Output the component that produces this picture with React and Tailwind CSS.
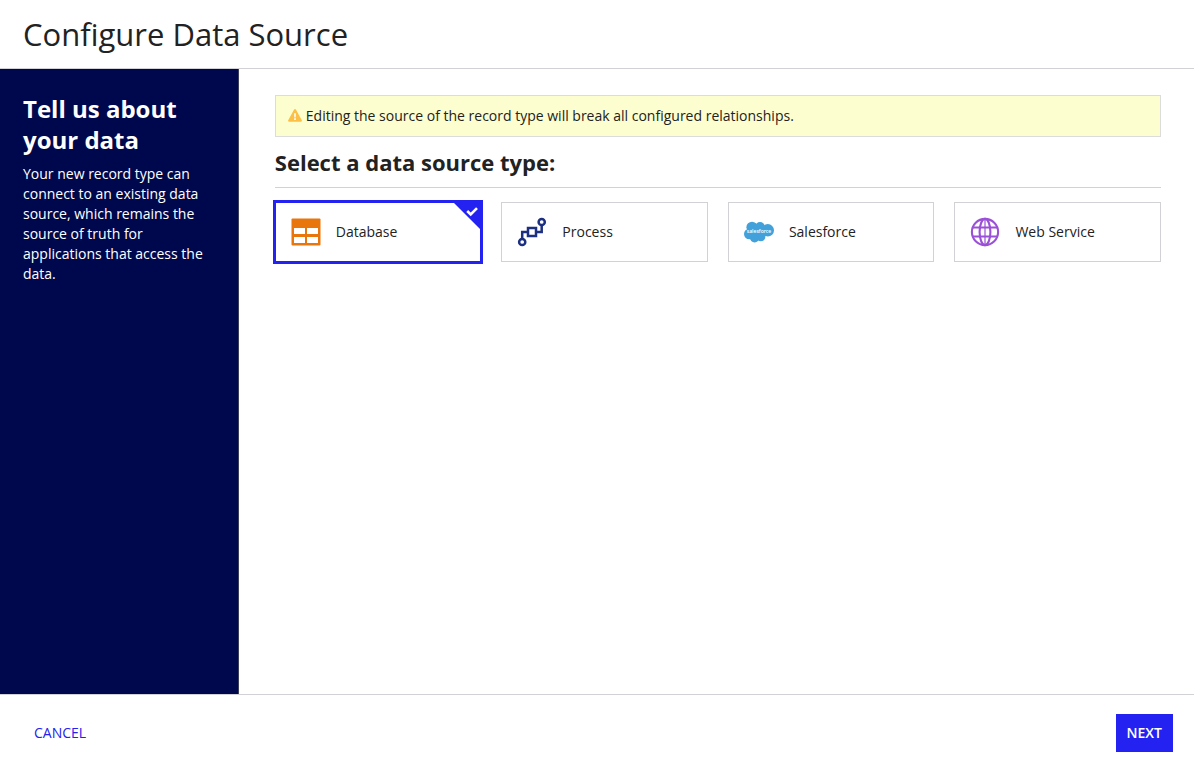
import { useState } from 'react';

function DatabaseIcon() {
  return (
    <svg viewBox="0 0 30 28" className="h-7 w-[30px]" aria-hidden="true">
      <rect x="0.5" y="0.5" width="29" height="27" rx="1" fill="#e8760c" />
      <path d="M3 10h11v6H3zM16 10h11v6H16zM3 19h11v6H3zM16 19h11v6H16z" fill="#fff" />
    </svg>
  );
}

function ProcessIcon() {
  return (
    <svg viewBox="0 0 30 30" className="h-[30px] w-[30px]" fill="none" stroke="#1c2f80" strokeWidth="2.5" aria-hidden="true">
      <circle cx="5.2" cy="25" r="3.1" />
      <circle cx="24.7" cy="5" r="3.1" />
      <rect x="11" y="11" width="8" height="8" />
      <path d="M5.2 21.7V15H11M19 15h5.7V8.3" />
    </svg>
  );
}

function SalesforceIcon() {
  return (
    <svg viewBox="0 0 30 22" className="h-[22px] w-[30px]" aria-hidden="true">
      <g fill="#42a1da">
        <circle cx="8" cy="6.3" r="5.6" />
        <circle cx="16" cy="6" r="4.9" />
        <circle cx="23.8" cy="9.3" r="6.2" />
        <circle cx="5.2" cy="13" r="5.2" />
        <circle cx="10.6" cy="16.6" r="4.8" />
        <circle cx="16.8" cy="15.7" r="4.6" />
        <path d="M5 7h20v8H5z" />
      </g>
      <text x="15" y="12" fill="#fff" fontSize="5" fontWeight="600" textAnchor="middle">
        salesforce
      </text>
    </svg>
  );
}

function GlobeIcon() {
  return (
    <svg viewBox="0 0 30 30" className="h-[30px] w-[30px]" fill="none" stroke="#9b51d6" strokeWidth="2.1" aria-hidden="true">
      <circle cx="15" cy="15" r="13.1" />
      <ellipse cx="15" cy="15" rx="5.4" ry="13.1" />
      <path d="M2.6 10.5h24.8M2.6 19.5h24.8" />
      <path d="M15 1.8v26.4" strokeWidth="1.2" />
    </svg>
  );
}

function WarningIcon() {
  return (
    <svg viewBox="0 0 14 14" className="h-3.5 w-3.5 shrink-0" aria-hidden="true">
      <path d="M6.1.6a1 1 0 0 1 1.8 0l5.9 10.7a1 1 0 0 1-.9 1.5H1.1a1 1 0 0 1-.9-1.5z" fill="#fcc046" />
      <path d="M6.1 4.2h1.8l-.25 4.2h-1.3zM6.1 9.3h1.8V11H6.1z" fill="#fff" />
    </svg>
  );
}

const SOURCES = [
  { id: 'database', label: 'Database', Icon: DatabaseIcon },
  { id: 'process', label: 'Process', Icon: ProcessIcon },
  { id: 'salesforce', label: 'Salesforce', Icon: SalesforceIcon },
  { id: 'web-service', label: 'Web Service', Icon: GlobeIcon },
];

function SourceCard({ source, selected, onSelect }) {
  const { id, label, Icon } = source;
  return (
    <label
      htmlFor={id}
      className={`relative flex h-[60px] cursor-pointer items-center gap-[15px] border pl-[15px] ${
        selected ? 'border-[#2322f0] ring-2 ring-[#2322f0]' : 'border-[#d2d2d6]'
      }`}
    >
      <input
        type="radio"
        id={id}
        name="source"
        checked={selected}
        onChange={onSelect}
        className="sr-only"
      />
      <Icon />
      <span>{label}</span>
      {selected && (
        <svg viewBox="0 0 26 26" className="absolute top-0 right-0 h-[26px] w-[26px]" aria-hidden="true">
          <path d="M0 0h26v26z" fill="#2322f0" />
          <path d="M13.2 8l3.5 3.5L23 5.2" fill="none" stroke="#fff" strokeWidth="2.6" />
        </svg>
      )}
    </label>
  );
}

export default function App() {
  const [selected, setSelected] = useState('database');

  return (
    <div className="flex min-h-screen flex-col bg-white font-['Open_Sans',sans-serif] text-sm leading-5 text-[#222]">
      <header className="border-b border-[#d2d2d6] px-[23px] py-3.5">
        <h1 className="text-[31px] leading-10">Configure Data Source</h1>
      </header>

      <div className="flex flex-1">
        <aside className="w-1/5 shrink-0 border-r border-[#3c3f5c] bg-[#00084d] px-[23px] pt-6 text-white">
          <h2 className="text-2xl leading-[31px] font-bold">Tell us about your data</h2>
          <p className="mt-[9px]">
            Your new record type can connect to an existing data source, which remains the source of truth for
            applications that access the data.
          </p>
        </aside>

        <main className="min-w-0 flex-1 pt-[26px] pr-[33px] pl-9">
          <div role="alert" className="flex items-center gap-1 border border-[#dcdcdc] bg-[#fdfecf] px-3 py-2.5">
            <WarningIcon />
            <p>Editing the source of the record type will break all configured relationships.</p>
          </div>
          <h2 className="mt-2.5 border-b border-[#d2d2d6] pb-2.5 text-[22px] leading-[30px] font-bold">
            Select a data source type:
          </h2>
          <div role="radiogroup" aria-label="Data source type" className="mt-3.5 grid grid-cols-4 gap-5">
            {SOURCES.map((source) => (
              <SourceCard
                key={source.id}
                source={source}
                selected={selected === source.id}
                onSelect={() => setSelected(source.id)}
              />
            ))}
          </div>
        </main>
      </div>

      <footer className="flex items-center justify-between border-t border-[#d2d2d6] px-[21px] pt-[19px] pb-2.5">
        <button type="button" className="h-[38px] px-[13px] text-[#2322f0]">
          CANCEL
        </button>
        <button type="button" className="h-[38px] bg-[#2322f0] px-[11px] font-semibold text-white">
          NEXT
        </button>
      </footer>
    </div>
  );
}
